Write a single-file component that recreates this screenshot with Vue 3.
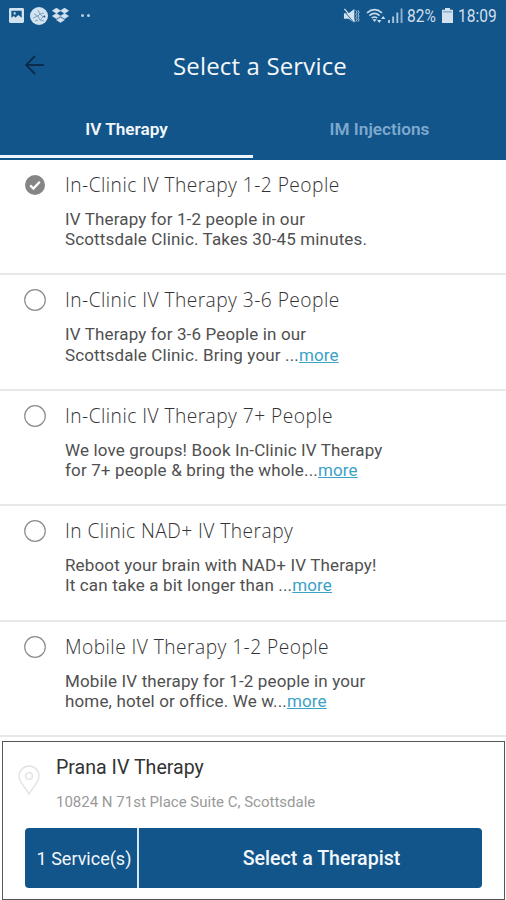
<template>
  <div class="screen">
    <header class="header">
      <div class="status-bar">
        <div class="status-left">
          <svg class="icon-photo" viewBox="0 0 16 16">
            <rect width="16" height="16" rx="1.5" fill="#d3e2ef" />
            <path d="M2.5 3h11v7.5l-3.5-3-3 2.5-2-1.5-2.5 2z" fill="#12558a" />
            <path d="M5 4.5h2v2.5h-2z" fill="#d3e2ef" />
          </svg>
          <svg class="icon-ball" viewBox="0 0 18 18">
            <circle cx="9" cy="9" r="9" fill="#d3e2ef" />
            <path
              d="M8 3l2 4 4-1M4 7l4 2 2-2M3 11l5-2 2 4 4 1M10 7l3 3-3 3M5 14l3-1"
              fill="none"
              stroke="#7fa5c3"
              stroke-width="1"
            />
            <circle cx="14.3" cy="9.4" r="1" fill="#12558a" />
          </svg>
          <svg class="icon-dropbox" viewBox="0 0 16 14">
            <path
              d="M4.2 0L8 2.5 4.2 5 0.3 2.5zM11.8 0l3.9 2.5L11.8 5 8 2.5zM4.2 5L8 7.5 4.2 10 0.3 7.5zM11.8 5l3.9 2.5-3.9 2.5L8 7.5zM8 8.8l3.7 2.4L8 13.6l-3.7-2.4z"
              fill="#d3e2ef"
              stroke="#d3e2ef"
              stroke-width="0.5"
            />
          </svg>
          <span class="dots"><i></i><i></i></span>
        </div>
        <div class="status-right">
          <svg class="icon-mute" viewBox="0 0 18 16">
            <path d="M1 5h5l6-4.500v15L6 11H1z" fill="#d3e2ef" />
            <path d="M1.500 0.500l11 13" stroke="#d3e2ef" stroke-width="1.3" />
            <path d="M0 1.500l12 14" stroke="#12558a" stroke-width="0.9" />
            <path
              d="M13.500 2l1.500 2-1.500 2 1.500 2-1.500 2 1.500 2-1.500 2M16 2l1 2-1 2 1 2-1 2 1 2-1 2"
              fill="none"
              stroke="#b5cde0"
              stroke-width="1"
            />
          </svg>
          <svg class="icon-wifi" viewBox="0 0 20 16">
            <path
              d="M1 4.8Q8.5-1.6 16 4.8M3.4 7.6q5-4.4 10.2 0M5.8 10.2q2.7-2.4 5.4 0"
              fill="none"
              stroke="#c8dbea"
              stroke-width="1.6"
            />
            <path d="M6.6 11.6q2-1.4 4 0L8.5 14z" fill="#c8dbea" />
            <path d="M11 12h4.4l-2.2 3zM15 11l2.2-3 2.2 3z" fill="#c8dbea" />
          </svg>
          <svg class="icon-signal" viewBox="0 0 15 15">
            <path d="M0 12h2v3H0zM4.2 8.5h1.9V15H4.2zM8.4 4.5h1.9V15H8.4z" fill="#a9c5db" />
            <path d="M12.6 0.5h1.9V15h-1.9z" fill="#8fb3ce" />
          </svg>
          <span class="battery-text">82%</span>
          <svg class="icon-battery" viewBox="0 0 11 15">
            <path d="M3 0h5v1.8h3V15H0V1.8h3z" fill="#d3e2ef" />
            <path d="M1 3.2h9v1.3H1z" fill="#7fa7c6" />
          </svg>
          <span class="clock">18:09</span>
        </div>
      </div>

      <div class="title-bar">
        <svg class="icon-back" viewBox="0 0 20 20">
          <path d="M10 1L1 10l9 9M1.2 10H19" fill="none" stroke="#0b2c4d" stroke-width="1.9" />
        </svg>
        <h1 class="title">Select a Service</h1>
      </div>

      <nav class="tabs">
        <button
          v-for="tab in tabs"
          :key="tab"
          class="tab"
          :class="{ active: tab === activeTab }"
          @click="activeTab = tab"
        >
          {{ tab }}
        </button>
      </nav>
    </header>

    <main class="services">
      <div
        v-for="service in services"
        :key="service.id"
        class="service"
        @click="selectedId = service.id"
      >
        <svg v-if="service.id === selectedId" class="radio" viewBox="0 0 24 24">
          <circle cx="12" cy="12" r="10" fill="#858585" />
          <path d="M7.2 12.4l3.2 3.1 6.4-6.7" fill="none" stroke="#fff" stroke-width="2.3" />
        </svg>
        <svg v-else class="radio" viewBox="0 0 24 24">
          <circle cx="12" cy="12" r="10.3" fill="none" stroke="#8c8c8c" stroke-width="1.2" />
        </svg>
        <div class="service-body">
          <h2 class="service-name">{{ service.name }}</h2>
          <p class="service-text">
            {{ service.lines[0] }}<br />{{ service.lines[1] }}<a v-if="service.more" class="more">more</a>
          </p>
        </div>
      </div>
    </main>

    <footer class="footer">
      <div class="location">
        <svg class="icon-pin" viewBox="0 0 22 30">
          <path
            d="M11 29C8 23 1 17.500 1 11a10 10 0 0 1 20 0c0 6.500-7 12-10 18z"
            fill="none"
            stroke="#e2e2e2"
            stroke-width="1.4"
          />
          <circle cx="11" cy="11" r="3.4" fill="none" stroke="#e2e2e2" stroke-width="1.4" />
        </svg>
        <div class="location-body">
          <div class="location-name">Prana IV Therapy</div>
          <div class="location-address">10824 N 71st Place Suite C, Scottsdale</div>
        </div>
      </div>
      <div class="actions">
        <div class="count">1 Service(s)</div>
        <button class="next">Select a Therapist</button>
      </div>
    </footer>
  </div>
</template>

<script setup>
import { ref } from 'vue'

const tabs = ['IV Therapy', 'IM Injections']
const activeTab = ref('IV Therapy')
const selectedId = ref(1)

const services = [
  {
    id: 1,
    name: 'In-Clinic IV Therapy 1-2 People',
    lines: ['IV Therapy for 1-2 people in our', 'Scottsdale Clinic. Takes 30-45 minutes.'],
    more: false
  },
  {
    id: 2,
    name: 'In-Clinic IV Therapy 3-6 People',
    lines: ['IV Therapy for 3-6 People in our', 'Scottsdale Clinic. Bring your ...'],
    more: true
  },
  {
    id: 3,
    name: 'In-Clinic IV Therapy 7+ People',
    lines: ['We love groups! Book In-Clinic IV Therapy', 'for 7+ people & bring the whole...'],
    more: true
  },
  {
    id: 4,
    name: 'In Clinic NAD+ IV Therapy',
    lines: ['Reboot your brain with NAD+ IV Therapy!', 'It can take a bit longer than ...'],
    more: true
  },
  {
    id: 5,
    name: 'Mobile IV Therapy 1-2 People',
    lines: ['Mobile IV therapy for 1-2 people in your', 'home, hotel or office. We w...'],
    more: true
  }
]
</script>

<style>
body {
  margin: 0;
  background: #fff;
}
</style>

<style scoped>
.screen {
  display: flex;
  flex-direction: column;
  width: 506px;
  height: 900px;
  overflow: hidden;
  background: #fff;
  font-family: Roboto, 'Liberation Sans', sans-serif;
  color: #505050;
}

.screen svg {
  display: block;
  flex: none;
}

.header {
  display: flex;
  flex-direction: column;
  flex: none;
  height: 160px;
  background: #12558a;
}

.status-bar {
  display: flex;
  justify-content: space-between;
  height: 31px;
  padding: 0 8px 0 9px;
}

.status-left,
.status-right {
  display: flex;
  align-items: center;
}

.icon-photo {
  width: 15px;
  height: 15px;
}

.icon-ball {
  width: 18px;
  height: 18px;
  margin-left: 6px;
}

.icon-dropbox {
  width: 17px;
  height: 15px;
  margin-left: 4px;
}

.dots {
  display: flex;
  gap: 3px;
  margin-left: 12px;
}

.dots i {
  width: 3px;
  height: 3px;
  border-radius: 50%;
  background: #b5cde0;
}

.icon-mute {
  width: 17px;
  height: 16px;
}

.icon-wifi {
  width: 20px;
  height: 16px;
  margin-left: 6px;
}

.icon-signal {
  width: 15px;
  height: 15px;
  margin-left: 2px;
}

.battery-text,
.clock {
  font-size: 18.5px;
  line-height: 32px;
  color: #cfdfec;
  white-space: nowrap;
  transform-origin: left center;
  transform: scaleX(0.84);
}

.battery-text {
  width: 30px;
  margin-left: 4px;
}

.icon-battery {
  width: 11px;
  height: 15px;
  margin-left: 5px;
}

.clock {
  width: 40px;
  margin-left: 5px;
}

.title-bar {
  display: grid;
  grid-template-columns: 45px 1fr 45px;
  align-items: center;
  height: 67px;
  padding: 0 11px 0 25px;
}

.icon-back {
  width: 20px;
  height: 20px;
}

.title {
  margin: 1px 0 0;
  font-family: 'Open Sans', 'Noto Sans', sans-serif;
  font-size: 24px;
  font-weight: 400;
  letter-spacing: 0.15px;
  text-align: center;
  white-space: nowrap;
  color: #f2f7fb;
}

.tabs {
  display: flex;
  flex: 1;
}

.tab {
  flex: 1;
  height: 60px;
  padding: 5px 0 0;
  border: 0;
  border-bottom: 3px solid transparent;
  background: none;
  font-family: inherit;
  font-size: 17.2px;
  font-weight: 600;
  color: #7ea9cf;
}

.tab.active {
  border-bottom-color: #edf6ff;
  color: #f2f7fb;
}

.services {
  flex: none;
  height: 577px;
}

.service {
  display: flex;
  box-sizing: border-box;
  height: 115.4px;
  padding: 13px 23px 0;
  border-bottom: 2px solid #e8e8e8;
}

.radio {
  width: 24px;
  height: 24px;
}

.service-body {
  margin-left: 18px;
}

.service-name {
  margin: 0;
  font-family: 'Open Sans', 'Noto Sans', sans-serif;
  font-size: 19.2px;
  font-weight: 300;
  letter-spacing: 0.45px;
  line-height: 24px;
  white-space: nowrap;
  color: #333;
}

.service-text {
  margin: 12px 0 0;
  font-size: 17px;
  letter-spacing: 0.14px;
  line-height: 20.3px;
  white-space: nowrap;
}

.more {
  color: #3ba1c5;
  text-decoration: underline;
}

.footer {
  box-sizing: border-box;
  flex: none;
  width: 503px;
  height: 159px;
  margin: 4px 0 0 2px;
  border: 1px solid #555;
}

.location {
  display: flex;
  height: 86px;
  padding-left: 15px;
}

.icon-pin {
  width: 22px;
  height: 30px;
  margin-top: 23px;
}

.location-body {
  margin-left: 16px;
}

.location-name {
  margin-top: 14px;
  font-size: 19.6px;
  line-height: 24px;
  color: #333;
}

.location-address {
  margin-top: 12px;
  font-size: 15px;
  line-height: 20px;
  color: #999;
}

.actions {
  display: flex;
  width: 457px;
  height: 60px;
  margin-left: 22px;
  overflow: hidden;
  border-radius: 4px;
  background: #12558a;
  color: #f2f7fb;
}

.count {
  flex: none;
  width: 112px;
  border-right: 2px solid #d5e5f2;
  font-size: 18px;
  line-height: 62px;
  text-align: center;
  text-indent: 6px;
}

.next {
  flex: 1;
  padding: 1px 0 0 22px;
  border: 0;
  background: none;
  font-family: inherit;
  font-size: 19.6px;
  font-weight: 500;
  color: inherit;
}
</style>
